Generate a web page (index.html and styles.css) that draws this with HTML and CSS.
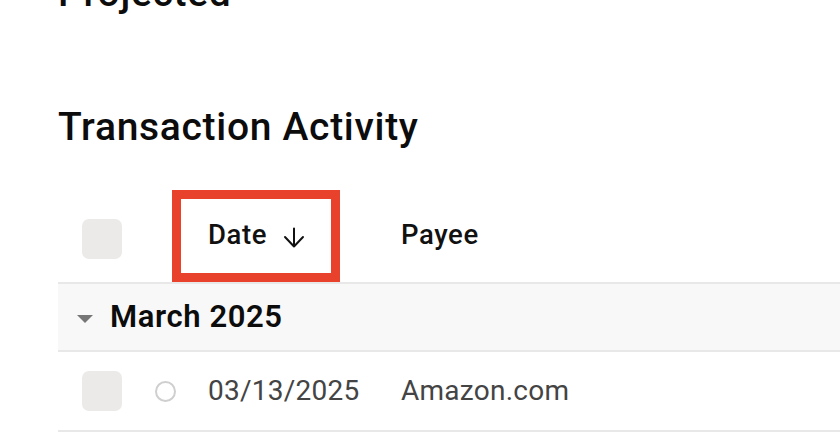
FILE: index.html
```html
<!DOCTYPE html>
<html lang="en">
<head>
<meta charset="utf-8">
<title>Transaction Activity</title>
<link rel="stylesheet" href="styles.css">
</head>
<body>
<main class="page">
  <h2 class="section-title section-title--clipped">Projected</h2>
  <h2 class="section-title">Transaction Activity</h2>
  <div class="table">
    <div class="row row--head">
      <div class="cell cell--check"><span class="checkbox"></span></div>
      <div class="cell cell--status"></div>
      <div class="cell cell--date head-label">
        <span>Date</span>
        <svg class="sort-icon" width="22" height="21" viewBox="0 0 22 21" aria-hidden="true">
          <path d="M11 1.5V19.5M2 10L11 19.5L20 10" fill="none" stroke="#111" stroke-width="2" stroke-linecap="round" stroke-linejoin="round"/>
        </svg>
      </div>
      <div class="cell cell--payee head-label"><span>Payee</span></div>
      <div class="highlight"></div>
    </div>
    <div class="row row--group">
      <span class="caret"></span>
      <span class="group-label">March 2025</span>
    </div>
    <div class="row row--data">
      <div class="cell cell--check"><span class="checkbox"></span></div>
      <div class="cell cell--status"><span class="status-dot"></span></div>
      <div class="cell cell--date">03/13/2025</div>
      <div class="cell cell--payee">Amazon.com</div>
    </div>
  </div>
</main>
</body>
</html>
```
FILE: styles.css
```css
html, body {
  margin: 0;
  padding: 0;
  background: #ffffff;
  overflow: hidden;
}

body {
  font-family: Roboto, "Liberation Sans", Arial, sans-serif;
  color: #111;
  width: 840px;
  height: 432px;
}

.page {
  padding-left: 58px;
}

.section-title {
  margin: 0;
  font-size: 39px;
  line-height: 46px;
  font-weight: 500;
  color: #0c0c0c;
  letter-spacing: 0.7px;
}

.section-title--clipped {
  margin-top: -30px;
  margin-bottom: 88px;
}

.table {
  margin-top: 50px;
}

.row {
  display: flex;
  border-bottom: 2px solid #e8e8e8;
}

.row--head {
  position: relative;
  height: 82px;
  align-items: flex-start;
}

.row--group {
  height: 66px;
  align-items: center;
  background: #f8f8f8;
  padding-left: 19px;
}

.row--data {
  height: 78px;
  align-items: center;
}

.cell--check {
  width: 40px;
  margin-left: 24px;
}

.row--head .cell--check {
  margin-top: 19px;
}

.checkbox {
  display: block;
  width: 40px;
  height: 40px;
  border-radius: 7px;
  background: #ebeae8;
}

.cell--status {
  width: 86px;
  display: flex;
  align-items: center;
}

.status-dot {
  display: block;
  width: 17px;
  height: 17px;
  margin-left: 33px;
  border: 2px solid #cfcfcf;
  border-radius: 50%;
}

.cell--date {
  width: 193px;
  display: flex;
  align-items: flex-start;
}

.row--data .cell {
  font-size: 28px;
  line-height: 28px;
  color: #444;
  letter-spacing: 0.25px;
}

.row--data .cell--check,
.row--data .cell--status {
  line-height: 0;
}

.head-label {
  font-size: 27.5px;
  line-height: 28px;
  font-weight: 500;
  color: #111;
  margin-top: 21px;
  letter-spacing: 0.6px;
}

.sort-icon {
  display: block;
  margin-left: 16px;
  margin-top: 6px;
}

.highlight {
  position: absolute;
  left: 114px;
  top: -10px;
  width: 150px;
  height: 74px;
  border: 9px solid #e8412c;
  pointer-events: none;
}

.caret {
  display: block;
  width: 0;
  height: 0;
  border-left: 8px solid transparent;
  border-right: 8px solid transparent;
  border-top: 8px solid #767676;
  margin-top: 4px;
}

.group-label {
  margin-left: 17px;
  font-size: 31px;
  line-height: 32px;
  font-weight: 600;
  color: #0c0c0c;
  letter-spacing: 0.6px;
}
```
